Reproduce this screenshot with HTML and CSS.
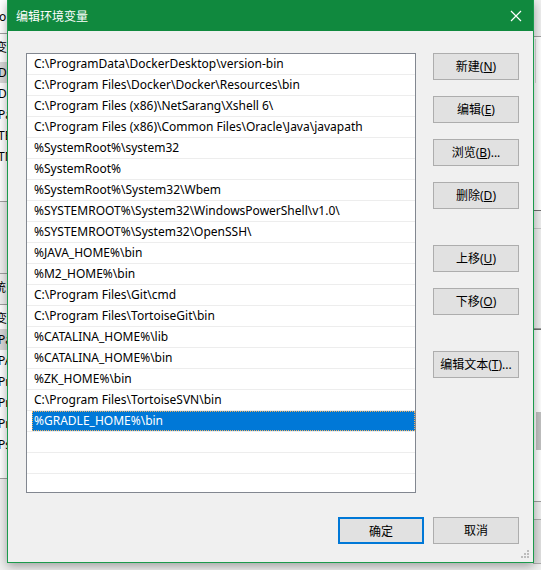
FILE: index.html
```html
<!DOCTYPE html>
<html lang="zh-CN">
<head>
    <meta charset="UTF-8">
    <title>编辑环境变量</title>
    <link rel="stylesheet" href="styles.css">
</head>
<body>
<div class="desktop">
    <!-- 后面的“环境变量”窗口，只露出两边一点 -->
    <div class="env-window">
        <div class="env-side env-left">
            <div class="bg-cap"><span>o</span></div>
            <div class="bg-list">
                <div class="bg-head">变</div>
                <div class="bg-row bg-sel">Dr</div>
                <div class="bg-row">Dr</div>
                <div class="bg-row">Pa</div>
                <div class="bg-row">TE</div>
                <div class="bg-row">TM</div>
            </div>
            <div class="bg-gap"></div>
            <div class="bg-label">统</div>
            <div class="bg-list bg-list2">
                <div class="bg-head">变</div>
                <div class="bg-row bg-sel">Pa</div>
                <div class="bg-row">PA</div>
                <div class="bg-row">Pr</div>
                <div class="bg-row">Pr</div>
                <div class="bg-row">Pr</div>
                <div class="bg-row">Ps</div>
            </div>
        </div>
        <div class="env-side env-right">
            <div class="bg-cap"></div>
            <div class="bg-list"><div class="bg-scroll"></div></div>
            <div class="bg-gap"></div>
            <div class="bg-list bg-list2"><div class="bg-thumb"></div></div>
            <div class="bg-btns"></div>
        </div>
    </div>

    <div class="dialog">
        <div class="dialog-title">
            <span>编辑环境变量</span>
            <svg class="close-icon" width="12" height="12" viewBox="0 0 12 12">
                <path d="M1 1 L11 11 M11 1 L1 11" stroke="#fff" stroke-width="1.2" fill="none"/>
            </svg>
        </div>
        <div class="dialog-body">
            <div class="dialog-main">
                <div class="path-list">
                    <div class="path-row"><span>C:\ProgramData\DockerDesktop\version-bin</span></div>
                    <div class="path-row"><span>C:\Program Files\Docker\Docker\Resources\bin</span></div>
                    <div class="path-row"><span>C:\Program Files (x86)\NetSarang\Xshell 6\</span></div>
                    <div class="path-row"><span>C:\Program Files (x86)\Common Files\Oracle\Java\javapath</span></div>
                    <div class="path-row"><span>%SystemRoot%\system32</span></div>
                    <div class="path-row"><span>%SystemRoot%</span></div>
                    <div class="path-row"><span>%SystemRoot%\System32\Wbem</span></div>
                    <div class="path-row"><span>%SYSTEMROOT%\System32\WindowsPowerShell\v1.0\</span></div>
                    <div class="path-row"><span>%SYSTEMROOT%\System32\OpenSSH\</span></div>
                    <div class="path-row"><span>%JAVA_HOME%\bin</span></div>
                    <div class="path-row"><span>%M2_HOME%\bin</span></div>
                    <div class="path-row"><span>C:\Program Files\Git\cmd</span></div>
                    <div class="path-row"><span>C:\Program Files\TortoiseGit\bin</span></div>
                    <div class="path-row"><span>%CATALINA_HOME%\lib</span></div>
                    <div class="path-row"><span>%CATALINA_HOME%\bin</span></div>
                    <div class="path-row"><span>%ZK_HOME%\bin</span></div>
                    <div class="path-row"><span>C:\Program Files\TortoiseSVN\bin</span></div>
                    <div class="path-row selected"><span>%GRADLE_HOME%\bin</span></div>
                    <div class="path-row"></div>
                    <div class="path-row"></div>
                    <div class="path-row last"></div>
                </div>
                <div class="side-buttons">
                    <button class="btn">新建(<u>N</u>)</button>
                    <button class="btn">编辑(<u>E</u>)</button>
                    <button class="btn">浏览(<u>B</u>)...</button>
                    <button class="btn">删除(<u>D</u>)</button>
                    <button class="btn group-start">上移(<u>U</u>)</button>
                    <button class="btn">下移(<u>O</u>)</button>
                    <button class="btn group-start">编辑文本(<u>T</u>)...</button>
                </div>
            </div>
            <div class="dialog-footer">
                <button class="btn btn-default">确定</button>
                <button class="btn">取消</button>
            </div>
        </div>
        <svg class="grip" width="9" height="9" viewBox="0 0 9 9">
            <rect x="6" y="0" width="2" height="2" fill="#bcbcbc"/>
            <rect x="3" y="3" width="2" height="2" fill="#bcbcbc"/>
            <rect x="6" y="3" width="2" height="2" fill="#bcbcbc"/>
            <rect x="0" y="6" width="2" height="2" fill="#bcbcbc"/>
            <rect x="3" y="6" width="2" height="2" fill="#bcbcbc"/>
            <rect x="6" y="6" width="2" height="2" fill="#bcbcbc"/>
        </svg>
    </div>
</div>
</body>
</html>
```

FILE: styles.css
```css
*{
    box-sizing: border-box;
}
body{
    margin: 0px;
    font-family: "Noto Sans", "Noto Sans CJK SC", sans-serif;
    font-size: 12px;
    color: #000000;
}
.desktop{
    position: relative;
    width: 541px;
    height: 570px;
    overflow: hidden;
    background: #f0f0f0;
}

/* 背后的窗口 */
.env-window{
    display: flex;
    justify-content: space-between;
    height: 100%;
}
.env-side{
    width: 8px;
    overflow: hidden;
    display: flex;
    flex-direction: column;
    white-space: nowrap;
    font-size: 12px;
}
.env-left .bg-cap{
    height: 34px;
    line-height: 34px;
    background: #ffffff;
    border-bottom: 1px solid #a0a0a0;
}
.env-left .bg-cap span{
    margin-left: -1px;
}
.bg-list{
    height: 168px;
    background: #ffffff;
    border-bottom: 1px solid #a0a0a0;
}
.bg-head{
    height: 28px;
    line-height: 28px;
    margin-left: -5px;
}
.bg-row{
    height: 21px;
    line-height: 21px;
    margin-left: -2px;
}
.bg-sel{
    background: #d9d9d9;
}
.bg-gap{
    height: 72px;
    border-bottom: 1px solid #a0a0a0;
}
.bg-label{
    height: 30px;
    line-height: 28px;
    margin-left: -6px;
}
.bg-list2{
    height: 175px;
    border-top: 1px solid #a0a0a0;
}
.bg-list2 .bg-head{
    height: 24px;
}
.env-right .bg-cap{
    height: 37px;
    border-bottom: 1px solid #a0a0a0;
}
.env-right .bg-list{
    height: 174px;
    border-bottom: 1px solid #707070;
    position: relative;
}
.bg-scroll{
    margin: 2px 0px 0px 2px;
    width: 1px;
    height: 44px;
    background: #dcdcdc;
}
.env-right .bg-gap{
    height: 101px;
    border-top: 1px solid #c8c8c8;
    margin-top: 17px;
}
.env-right .bg-list2{
    height: 173px;
    border-top: 1px solid #707070;
    border-bottom: 1px solid #a0a0a0;
}
.bg-thumb{
    margin: 82px 0px 0px 3px;
    width: 5px;
    height: 38px;
    background: #c2c2c2;
}
.bg-btns{
    height: 45px;
    margin-top: 17px;
    border-top: 1px solid #adadad;
    border-bottom: 1px solid #adadad;
    background: #e1e1e1;
}

/* 编辑环境变量 对话框 */
.dialog{
    position: absolute;
    left: 7px;
    top: 0px;
    width: 527px;
    height: 563px;
    background: #f0f0f0;
    border: 1px solid #1b9a4c;
    border-top: none;
    box-shadow: 0px 3px 10px rgba(0, 0, 0, 0.35);
    display: flex;
    flex-direction: column;
}
.dialog-title{
    height: 31px;
    background: #10893e;
    color: #ffffff;
    display: flex;
    align-items: center;
    justify-content: space-between;
    padding: 0px 11px 0px 8px;
    font-family: "Noto Sans CJK SC", sans-serif;
    font-size: 12px;
}
.close-icon{
    display: block;
}
.dialog-body{
    flex: 1;
    display: flex;
    flex-direction: column;
    padding: 22px 14px 18px 18px;
}
.dialog-main{
    display: flex;
    gap: 17px;
}
.path-list{
    width: 390px;
    height: 440px;
    background: #ffffff;
    border: 1px solid #828790;
    overflow: hidden;
}
.path-row{
    height: 21px;
    border-bottom: 1px solid #ededed;
    padding-left: 5px;
    white-space: nowrap;
}
.path-row span{
    display: block;
    height: 20px;
    line-height: 20px;
    padding-left: 2px;
}
.path-row.selected span{
    background: #0078d7;
    color: #ffffff;
    border: 1px dotted #f0b060;
    line-height: 18px;
    padding-left: 1px;
}
.side-buttons{
    display: flex;
    flex-direction: column;
    gap: 16px;
}
.btn{
    width: 86px;
    height: 27px;
    padding: 0px;
    margin: 0px;
    background: #e1e1e1;
    border: 1px solid #adadad;
    font-family: "Noto Sans", "Noto Sans CJK SC", sans-serif;
    font-size: 12px;
    color: #000000;
    line-height: 25px;
}
.btn.group-start{
    margin-top: 20px;
}
.dialog-footer{
    margin-top: auto;
    display: flex;
    justify-content: flex-end;
    gap: 9px;
}
.btn-default{
    border: 2px solid #0078d7;
}
.grip{
    position: absolute;
    right: 3px;
    bottom: 3px;
}
```
